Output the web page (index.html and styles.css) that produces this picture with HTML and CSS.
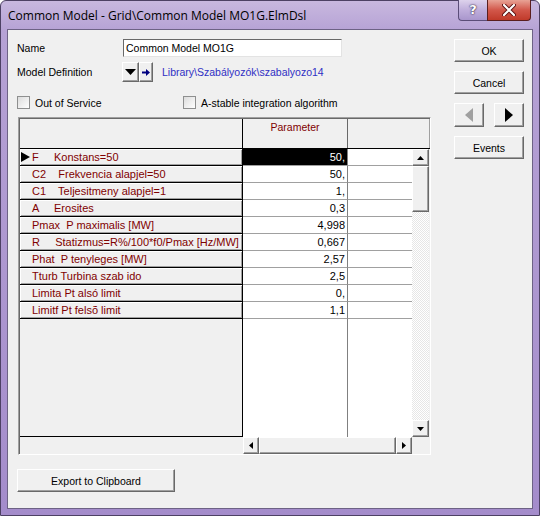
FILE: index.html
```html
<!DOCTYPE html>
<html lang="en">
<head>
    <meta charset="UTF-8">
    <title>Common Model - Grid\Common Model MO1G.ElmDsl</title>
    <link rel="stylesheet" href="styles.css">
</head>
<body>
<div class="window">
    <div class="titlebar">
        <span class="title">Common Model - Grid\Common Model MO1G.ElmDsl</span>
        <div class="caption-btns">
            <div class="cap-help">?</div>
            <div class="cap-close">
                <svg width="14" height="12" viewBox="0 0 14 12">
                    <path d="M2 1 L12 11 M12 1 L2 11" stroke="#5a1010" stroke-width="4" stroke-linecap="round"/>
                    <path d="M2 1 L12 11 M12 1 L2 11" stroke="#fff" stroke-width="2.2" stroke-linecap="round"/>
                </svg>
            </div>
        </div>
    </div>

    <div class="client">
        <div class="main">
            <div class="field">
                <span class="lbl">Name</span>
                <div class="textbox">Common Model MO1G</div>
            </div>

            <div class="field model">
                <span class="lbl">Model Definition</span>
                <div class="raised btn-drop">
                    <svg width="11" height="6" viewBox="0 0 11 6"><path d="M0 0 H11 L5.5 6 Z" fill="#000"/></svg>
                </div>
                <div class="raised btn-goto">
                    <svg width="8" height="7" viewBox="0 0 8 7"><path d="M0 2.5 H4 V0 L8 3.5 L4 7 V4.5 H0 Z" fill="#000080"/></svg>
                </div>
                <span class="link">Library\Szabályozók\szabalyozo14</span>
            </div>

            <div class="checks">
                <div class="check first"><span class="box"></span>Out of Service</div>
                <div class="check"><span class="box"></span>A-stable integration algorithm</div>
            </div>

            <div class="grid">
                <div class="grid-in">
                    <div class="grid-head">
                        <div class="gh-name"></div>
                        <div class="gh-param">Parameter</div>
                        <div class="gh-extra"></div>
                    </div>

                    <div class="grid-mid">
                        <div class="table">
                            <div class="row current">
                                <div class="c-name"><svg class="mark" width="9" height="10" viewBox="0 0 9 10"><path d="M0 0 L9 5 L0 10 Z" fill="#000"/></svg>F     Konstans=50</div>
                                <div class="c-val">50,</div>
                                <div class="c-extra"></div>
                            </div>
                            <div class="row">
                                <div class="c-name">C2    Frekvencia alapjel=50</div>
                                <div class="c-val">50,</div>
                                <div class="c-extra"></div>
                            </div>
                            <div class="row">
                                <div class="c-name">C1    Teljesitmeny alapjel=1</div>
                                <div class="c-val">1,</div>
                                <div class="c-extra"></div>
                            </div>
                            <div class="row">
                                <div class="c-name">A     Erosites</div>
                                <div class="c-val">0,3</div>
                                <div class="c-extra"></div>
                            </div>
                            <div class="row">
                                <div class="c-name">Pmax  P maximalis [MW]</div>
                                <div class="c-val">4,998</div>
                                <div class="c-extra"></div>
                            </div>
                            <div class="row">
                                <div class="c-name">R     Statizmus=R%/100*f0/Pmax [Hz/MW]</div>
                                <div class="c-val">0,667</div>
                                <div class="c-extra"></div>
                            </div>
                            <div class="row">
                                <div class="c-name">Phat  P tenyleges [MW]</div>
                                <div class="c-val">2,57</div>
                                <div class="c-extra"></div>
                            </div>
                            <div class="row">
                                <div class="c-name">Tturb Turbina szab ido</div>
                                <div class="c-val">2,5</div>
                                <div class="c-extra"></div>
                            </div>
                            <div class="row">
                                <div class="c-name">Limita Pt alsó limit</div>
                                <div class="c-val">0,</div>
                                <div class="c-extra"></div>
                            </div>
                            <div class="row">
                                <div class="c-name">Limitf Pt felsõ limit</div>
                                <div class="c-val">1,1</div>
                                <div class="c-extra"></div>
                            </div>
                            <div class="filler">
                                <div class="f-name"></div>
                                <div class="f-val"></div>
                                <div class="f-extra"></div>
                            </div>
                        </div>

                        <div class="vscroll">
                            <div class="raised sb-btn">
                                <svg width="7" height="4" viewBox="0 0 7 4"><path d="M0 4 L3.5 0 L7 4 Z" fill="#000"/></svg>
                            </div>
                            <div class="raised thumb"></div>
                            <div class="track"></div>
                            <div class="raised sb-btn">
                                <svg width="7" height="4" viewBox="0 0 7 4"><path d="M0 0 L7 0 L3.5 4 Z" fill="#000"/></svg>
                            </div>
                        </div>
                        <div class="gap"></div>
                    </div>

                    <div class="grid-foot">
                        <div class="ft-blank"></div>
                        <div class="hscroll">
                            <div class="raised sb-btn h">
                                <svg width="4" height="7" viewBox="0 0 4 7"><path d="M4 0 L4 7 L0 3.5 Z" fill="#000"/></svg>
                            </div>
                            <div class="raised htrack"></div>
                            <div class="raised sb-btn h">
                                <svg width="4" height="7" viewBox="0 0 4 7"><path d="M0 0 L4 3.5 L0 7 Z" fill="#000"/></svg>
                            </div>
                        </div>
                        <div class="corner"></div>
                    </div>
                </div>
            </div>

            <div class="raised btn export">Export to Clipboard</div>
        </div>

        <div class="side">
            <div class="raised btn">OK</div>
            <div class="raised btn">Cancel</div>
            <div class="nav">
                <div class="raised btn nav-btn">
                    <svg width="8" height="14" viewBox="0 0 8 14"><path d="M8 0 L8 14 L0 7 Z" fill="#a0a0a0"/></svg>
                </div>
                <div class="raised btn nav-btn">
                    <svg width="8" height="14" viewBox="0 0 8 14"><path d="M0 0 L8 7 L0 14 Z" fill="#000"/></svg>
                </div>
            </div>
            <div class="raised btn">Events</div>
        </div>
    </div>
</div>
</body>
</html>
```

FILE: styles.css
```css
* {
    box-sizing: border-box;
}
body {
    margin: 0;
    font-family: "Liberation Sans", Arial, sans-serif;
    font-size: 10.5px;
    color: #000;
}
.window {
    width: 540px;
    height: 516px;
    display: flex;
    flex-direction: column;
    background: linear-gradient(#c8b8df, #b6a2d5 30px, #a48ccb);
    border: 1px solid #4d4164;
    border-radius: 6px 6px 0 0;
}

/* title bar */
.titlebar {
    height: 28px;
    display: flex;
    justify-content: space-between;
    flex: none;
}
.title {
    font-family: "Open Sans", "Noto Sans", sans-serif;
    font-size: 12px;
    padding: 6px 0 0 7px;
    color: #000;
}
.caption-btns {
    display: flex;
    height: 21px;
    margin-top: -1px;
    margin-right: 8px;
}
.cap-help {
    width: 29px;
    border: 1px solid #5b4d78;
    border-right: none;
    border-top: none;
    border-radius: 0 0 0 4px;
    background: linear-gradient(#ddd2ec, #bfaedb 50%, #a996cc);
    color: #fff;
    font-family: "DejaVu Sans", sans-serif;
    font-weight: bold;
    font-size: 13px;
    text-align: center;
    line-height: 19px;
    text-shadow: 0 0 2px #2c2040, 0 0 1px #2c2040;
}
.cap-close {
    width: 44px;
    border: 1px solid #5a1e1e;
    border-top: none;
    border-radius: 0 0 4px 0;
    background: linear-gradient(#e8a295, #d2574a 50%, #c03a2a);
    display: flex;
    align-items: center;
    justify-content: center;
}

/* client area */
.client {
    flex: 1;
    margin: 0 6px 6px;
    border: 1px solid #6d6285;
    background: #f0f0f0;
    display: flex;
    padding: 9px 0 0 9px;
}
.main {
    width: 414px;
    display: flex;
    flex-direction: column;
    align-items: flex-start;
}
.side {
    width: 70px;
    margin-left: 23px;
    display: flex;
    flex-direction: column;
    gap: 9px;
}

.raised {
    background: #f0f0f0;
    border: 1px solid;
    border-color: #fff #696969 #696969 #fff;
    box-shadow: inset -1px -1px #a0a0a0;
    display: flex;
    align-items: center;
    justify-content: center;
}
.btn {
    height: 23px;
}
.nav {
    display: flex;
    justify-content: space-between;
}
.nav-btn {
    width: 30px;
    height: 24px;
}

/* fields */
.field {
    display: flex;
    align-items: center;
    height: 18px;
}
.lbl {
    width: 106px;
}
.textbox {
    width: 219px;
    height: 18px;
    background: #fff;
    border: 1px solid;
    border-color: #696969 #e3e3e3 #e3e3e3 #696969;
    padding: 0 2px;
    line-height: 16px;
}
.model {
    height: 20px;
    margin-top: 5px;
}
.model .lbl {
    width: 105px;
}
.btn-drop {
    width: 17px;
    height: 20px;
}
.btn-goto {
    width: 14px;
    height: 20px;
}
.link {
    margin-left: 9px;
    color: #2f2fc4;
}

.checks {
    display: flex;
    margin-top: 14px;
    height: 13px;
    align-items: center;
}
.check {
    display: flex;
    align-items: center;
}
.check.first {
    width: 166px;
}
.box {
    width: 13px;
    height: 13px;
    border: 1px solid #8e8f8f;
    background: linear-gradient(135deg, #dcdcdc, #fff);
    margin-right: 5px;
}

/* parameter grid */
.grid {
    margin: 8px 0 0 1px;
    width: 413px;
    height: 338px;
    border: 1px solid;
    border-color: #a0a0a0 #fff #fff #a0a0a0;
    display: flex;
}
.grid-in {
    flex: 1;
    display: flex;
    flex-direction: column;
    border-top: 1px solid #696969;
    border-left: 1px solid #696969;
}
.grid-head {
    height: 30px;
    flex: none;
    display: flex;
    border-bottom: 1px solid #000;
}
.gh-name {
    width: 223px;
    border-right: 1px solid #000;
}
.gh-param {
    width: 105px;
    border-right: 1px solid #696969;
    color: #800000;
    text-align: center;
    padding-top: 2px;
}
.gh-extra {
    flex: 1;
    border-right: 1px solid #a0a0a0;
}

.grid-mid {
    flex: 1;
    display: flex;
}
.table {
    width: 392px;
    display: flex;
    flex-direction: column;
    background: #fff;
}
.row {
    height: 17px;
    display: flex;
    flex: none;
    line-height: 16px;
}
.c-name {
    width: 223px;
    position: relative;
    background: #f0f0f0;
    border-right: 1px solid #000;
    border-bottom: 1px solid #000;
    box-shadow: inset 1px 1px #fff, inset -1px -1px #a0a0a0;
    color: #800000;
    font-size: 11px;
    padding-left: 12px;
    white-space: pre;
}
.mark {
    position: absolute;
    left: 1px;
    top: 3px;
}
.c-val {
    width: 105px;
    border-right: 1px solid #808080;
    border-bottom: 1px solid #a0a0a0;
    font-size: 11px;
    text-align: right;
    padding-right: 2px;
}
.current .c-val {
    background: #000;
    color: #fff;
}
.c-extra {
    flex: 1;
    border-bottom: 1px solid #a0a0a0;
}
.filler {
    flex: 1;
    display: flex;
}
.f-name {
    width: 223px;
    background: #f0f0f0;
    border-right: 1px solid #000;
    border-bottom: 1px solid #000;
}
.f-val {
    width: 105px;
    border-right: 1px solid #808080;
}
.f-extra {
    flex: 1;
}

.vscroll {
    width: 17px;
    display: flex;
    flex-direction: column;
}
.sb-btn {
    height: 17px;
    flex: none;
}
.sb-btn.h {
    width: 16px;
    height: auto;
}
.thumb {
    height: 46px;
    flex: none;
}
.track {
    flex: 1;
    background: repeating-conic-gradient(#fff 0 25%, #e6e6e6 0 50%) 0 0 / 2px 2px;
}
.gap {
    flex: 1;
    background: #f0f0f0;
}

.grid-foot {
    height: 17px;
    flex: none;
    display: flex;
    background: #f0f0f0;
}
.ft-blank {
    width: 223px;
}
.hscroll {
    width: 169px;
    display: flex;
}
.htrack {
    flex: 1;
}
.corner {
    flex: 1;
}

.export {
    width: 158px;
    margin-top: 14px;
}
```
